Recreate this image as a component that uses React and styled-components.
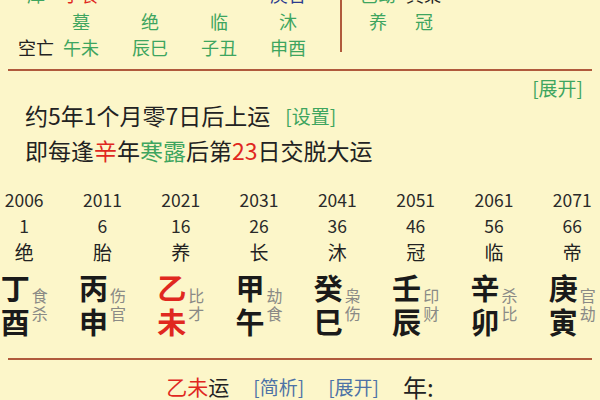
import React from 'react'
import styled, { createGlobalStyle } from 'styled-components'

const GlobalStyle = createGlobalStyle`
  body {
    margin: 0;
    background: #fcf6c9;
    font-family: 'Noto Sans CJK SC', 'Noto Sans', sans-serif;
    color: #222;
  }
`

const colors = {
  green: '#3ea55f',
  red: '#e0281f',
  navy: '#2b3a8f',
  blue: '#4d72a6',
  gray: '#8a8a86',
  line: '#b05a3c',
}

const Page = styled.div`
  width: 600px;
  height: 400px;
  overflow: hidden;
  background: #fcf6c9;
`

const TopSection = styled.div`
  display: flex;
  margin-top: -19px;
`

const LeftGrid = styled.div`
  display: grid;
  grid-template-columns: 28.5px repeat(4, 69px);
  grid-auto-rows: 26.5px;
  align-items: center;
  justify-items: center;
  padding-left: 18px;
  font-size: 18px;
  line-height: 1;
`

const RightGrid = styled.div`
  display: grid;
  grid-template-columns: repeat(2, 46px);
  grid-auto-rows: 26.5px;
  align-items: center;
  justify-items: center;
  margin-left: 13px;
  font-size: 18px;
  line-height: 1;
`

const Cell = styled.span`
  color: ${({ color }) => color || '#222'};
  white-space: nowrap;
`

const Label = styled(Cell)`
  justify-self: start;
  padding-left: ${({ indent }) => indent || 0}px;
`

const VLine = styled.div`
  width: 2px;
  height: 71px;
  margin-left: 17.5px;
  background: ${colors.line};
`

const HLine = styled.div`
  height: 2px;
  margin: ${({ top }) => top}px 8px 0;
  background: ${colors.line};
`

const LinkRow = styled.div`
  display: flex;
  justify-content: flex-end;
  margin-top: 7px;
  padding-right: 17px;
  line-height: 20px;
`

const Link = styled.span`
  color: ${({ color }) => color || colors.green};
  font-size: 19px;
`

const InfoLine = styled.div`
  display: flex;
  align-items: center;
  gap: 15px;
  height: 35px;
  padding-left: 25px;
  font-size: 23px;
`

const Em = styled.span`
  color: ${({ color }) => color};
`

const Dayun = styled.div`
  display: grid;
  grid-template-columns: repeat(8, 78.3px);
  margin: 19.5px 0 0 -15px;
`

const Column = styled.div`
  display: flex;
  flex-direction: column;
  align-items: center;
`

const Num = styled.div`
  height: 26px;
  line-height: 26px;
  font-size: 17.5px;
  color: #2a2a2a;
`

const Stage = styled.div`
  height: 26px;
  line-height: 26px;
  font-size: 19px;
`

const Pillar = styled.div`
  display: grid;
  grid-template-columns: auto auto;
  grid-template-rows: 34px 34px;
  column-gap: 2px;
  margin-top: 5px;
`

const Big = styled.span`
  font-size: 29px;
  line-height: 34px;
  font-weight: 700;
  color: ${({ hot }) => (hot ? colors.red : '#1a1a1a')};
`

const Small = styled.span`
  font-size: 16px;
  line-height: 18px;
  color: ${colors.gray};
  align-self: ${({ low }) => (low ? 'start' : 'end')};
`

const BottomRow = styled.div`
  display: flex;
  justify-content: center;
  align-items: center;
  gap: 24px;
  margin-top: 11px;
  height: 30px;
  font-size: 21px;
`

const Year = styled.span`
  font-size: 24px;
`

const dayun = [
  { year: 2006, age: 1, stage: '绝', stem: '丁', branch: '酉', g1: '食', g2: '杀' },
  { year: 2011, age: 6, stage: '胎', stem: '丙', branch: '申', g1: '伤', g2: '官' },
  { year: 2021, age: 16, stage: '养', stem: '乙', branch: '未', g1: '比', g2: '才', hot: true },
  { year: 2031, age: 26, stage: '长', stem: '甲', branch: '午', g1: '劫', g2: '食' },
  { year: 2041, age: 36, stage: '沐', stem: '癸', branch: '巳', g1: '枭', g2: '伤' },
  { year: 2051, age: 46, stage: '冠', stem: '壬', branch: '辰', g1: '印', g2: '财' },
  { year: 2061, age: 56, stage: '临', stem: '辛', branch: '卯', g1: '杀', g2: '比' },
  { year: 2071, age: 66, stage: '帝', stem: '庚', branch: '寅', g1: '官', g2: '劫' },
]

export default function App() {
  return (
    <Page>
      <GlobalStyle />
      <TopSection>
        <LeftGrid>
          <Label color={colors.green} indent={9}>库</Label>
          <Cell color={colors.red}>子食</Cell>
          <Cell />
          <Cell />
          <Cell color={colors.navy}>庚官</Cell>

          <Label />
          <Cell color={colors.green}>墓</Cell>
          <Cell color={colors.green}>绝</Cell>
          <Cell color={colors.green}>临</Cell>
          <Cell color={colors.green}>沐</Cell>

          <Label>空亡</Label>
          <Cell color={colors.green}>午未</Cell>
          <Cell color={colors.green}>辰巳</Cell>
          <Cell color={colors.green}>子丑</Cell>
          <Cell color={colors.green}>申酉</Cell>
        </LeftGrid>
        <VLine />
        <RightGrid>
          <Cell color={colors.green}>巳劫</Cell>
          <Cell>寅枭</Cell>
          <Cell color={colors.green}>养</Cell>
          <Cell color={colors.green}>冠</Cell>
        </RightGrid>
      </TopSection>

      <HLine top={8} />
      <LinkRow>
        <Link>[展开]</Link>
      </LinkRow>

      <InfoLine>
        <span>约5年1个月零7日后上运</span>
        <Link>[设置]</Link>
      </InfoLine>
      <InfoLine>
        <span>
          即每逢<Em color={colors.red}>辛</Em>年<Em color={colors.green}>寒露</Em>后第
          <Em color={colors.red}>23</Em>日交脱大运
        </span>
      </InfoLine>

      <Dayun>
        {dayun.map((d) => (
          <Column key={d.year}>
            <Num>{d.year}</Num>
            <Num>{d.age}</Num>
            <Stage>{d.stage}</Stage>
            <Pillar>
              <Big hot={d.hot}>{d.stem}</Big>
              <Small>{d.g1}</Small>
              <Big hot={d.hot}>{d.branch}</Big>
              <Small low>{d.g2}</Small>
            </Pillar>
          </Column>
        ))}
      </Dayun>

      <HLine top={20} />
      <BottomRow>
        <span>
          <Em color={colors.red}>乙未</Em>运
        </span>
        <Link color={colors.blue}>[简析]</Link>
        <Link color={colors.blue}>[展开]</Link>
        <Year>年:</Year>
      </BottomRow>
    </Page>
  )
}
